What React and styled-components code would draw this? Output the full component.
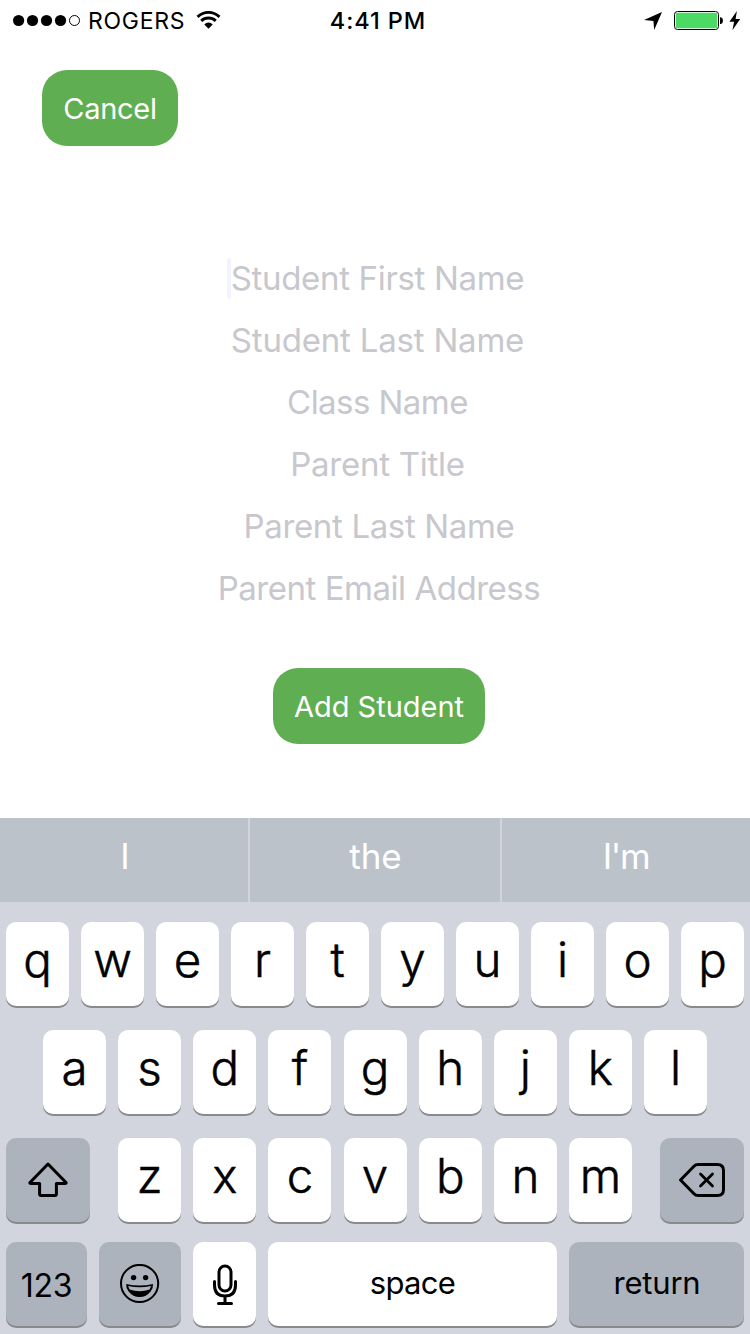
import React from "react";
import styled, { createGlobalStyle } from "styled-components";

const GlobalStyle = createGlobalStyle`
  * { box-sizing: border-box; }
  body { margin: 0; background: #fff; }
`;

const Screen = styled.div`
  display: flex;
  flex-direction: column;
  width: 750px;
  height: 1334px;
  overflow: hidden;
  background: #fff;
  color: #000;
  font-family: Inter, "Liberation Sans", sans-serif;
`;

const StatusBar = styled.header`
  display: grid;
  grid-template-columns: 1fr auto 1fr;
  align-items: center;
  height: 40px;
  padding: 0 9px 0 12px;
`;

const StatusGroup = styled.div`
  display: flex;
  align-items: center;
`;

const PowerGroup = styled(StatusGroup)`
  justify-content: flex-end;
  gap: 5px;
  padding-top: 1px;
`;

const Carrier = styled.span`
  margin: 0 11px 0 6px;
  padding-top: 2px;
  font-size: 23px;
  line-height: 38px;
  letter-spacing: 0.7px;
`;

const Clock = styled.span`
  padding: 1px 0 0 3px;
  font-size: 23.5px;
  font-weight: 500;
  line-height: 39px;
  letter-spacing: 0.93px;
`;

const Form = styled.main`
  display: flex;
  flex-direction: column;
  height: 778px;
  padding: 30px 0 0;
`;

const Button = styled.button`
  display: flex;
  align-items: center;
  justify-content: center;
  align-self: ${(p) => (p.$centered ? "center" : "flex-start")};
  width: ${(p) => p.$width}px;
  height: 76px;
  margin: ${(p) => p.$margin};
  padding: 1px 0 0;
  border: 0;
  border-radius: 25px;
  background: #60ae52;
  color: #fff;
  font: 400 29px/36px Inter, "Liberation Sans", sans-serif;
  letter-spacing: ${(p) => p.$spacing ?? 0}px;
`;

const Fields = styled.div`
  display: flex;
  flex-direction: column;
  align-items: center;
  margin-top: 101px;
  padding-left: 5px;
`;

const Field = styled.div`
  position: relative;
  height: 62px;
  padding-left: ${(p) => p.$indent}px;
  color: #c7c7cd;
  font-size: 33px;
  line-height: 62px;
  white-space: nowrap;
  letter-spacing: ${(p) => p.$spacing}px;
`;

const Caret = styled.span`
  position: absolute;
  top: 11px;
  left: -4px;
  width: 4px;
  height: 41px;
  border-radius: 2px;
  background: #f1f4fe;
`;

const Keyboard = styled.section`
  display: flex;
  flex-direction: column;
  height: 516px;
  background: #d2d5dd;
`;

const Suggestions = styled.div`
  display: grid;
  grid-template-columns: 248px 250px 248px;
  gap: 2px;
  height: 84px;
`;

const Suggestion = styled.div`
  padding-left: ${(p) => p.$indent ?? 1}px;
  background: #bbc2ca;
  color: #fff;
  font-size: 35px;
  line-height: 76px;
  text-align: center;
  letter-spacing: ${(p) => p.$spacing ?? 0}px;
`;

const Rows = styled.div`
  display: flex;
  flex-direction: column;
  gap: 24px;
  padding: 20px 6px 0;
`;

const Row = styled.div`
  display: flex;
  gap: 12px;
  padding: 0 ${(p) => p.$inset ?? 0}px;
  margin-top: ${(p) => p.$lift ?? 0}px;
`;

const Letters = styled.div`
  display: flex;
  flex: 1;
  justify-content: space-between;
  margin: ${(p) => p.$margin ?? 0};
`;

const Key = styled.div`
  display: flex;
  flex: none;
  align-items: center;
  justify-content: center;
  width: ${(p) => p.$width ?? 63}px;
  height: 84px;
  border-radius: 10px;
  background: ${(p) => (p.$dark ? "#acb3bd" : "#fff")};
  box-shadow: 0 2px 0 #898a8e;
`;

const Letter = styled.span`
  padding-bottom: 9px;
  font-size: 47.5px;
  font-weight: 300;
  line-height: 75px;
  -webkit-text-stroke: 0.5px #000;
`;

const Label = styled.span`
  padding: ${(p) => p.$padding};
  font-size: ${(p) => p.$size}px;
  line-height: 40px;
  letter-spacing: ${(p) => p.$spacing}px;
`;

const SignalDots = () => (
  <svg width="70" height="14" viewBox="0 0 70 14">
    {[6.6, 20.5, 34.5, 48.5].map((x) => (
      <circle key={x} cx={x} cy="7.5" r="5.6" />
    ))}
    <circle cx="62.5" cy="7.5" r="5" fill="none" stroke="#000" strokeWidth="1" />
  </svg>
);

const WifiIcon = () => (
  <svg width="26" height="20" viewBox="0 0 26 20">
    <g fill="none" stroke="#000" strokeWidth="2.9">
      <path d="M1.5 6.9Q6.5 2.4 12.5 2.4T23.5 6.9" />
      <path d="M5.2 10.8Q8.3 8 12.5 8T19.8 10.8" />
    </g>
    <path d="M8.3 14.6Q10 12.6 12.5 12.6T16.7 14.6L12.5 18.8Z" />
  </svg>
);

const LocationIcon = () => (
  <svg width="25" height="18" viewBox="0 0 25 18">
    <path d="M18 0L10.2 18L9.4 9.1L0 8.1Z" />
  </svg>
);

const BatteryIcon = () => (
  <svg width="50" height="20" viewBox="0 0 50 20">
    <rect x="0.5" y="0.5" width="44" height="18" rx="3" fill="#fff" stroke="#000" strokeWidth="1" />
    <rect x="1.8" y="1.8" width="41.4" height="15.4" rx="1.5" fill="#4cd964" />
    <path d="M46 6.2H47Q49 7 49 9.6T47 13H46Z" />
  </svg>
);

const BoltIcon = () => (
  <svg width="12" height="20" viewBox="0 0 12 20">
    <path d="M7.9 0L0.4 10.8H5.1L3.4 19.2L11.2 7.9H6.6Z" />
  </svg>
);

const ShiftIcon = () => (
  <svg width="40" height="36" viewBox="0 0 40 36" fill="none" stroke="#000" strokeWidth="3" strokeLinejoin="round">
    <path d="M20 2L38 20.5Q38.5 21.5 37 21.5H28.4V32Q28.4 33.5 26.9 33.5H13.1Q11.6 33.5 11.6 32V21.5H3Q1.5 21.5 2 20.5Z" />
  </svg>
);

const DeleteIcon = () => (
  <svg width="48" height="36" viewBox="0 0 48 36" fill="none" stroke="#000" strokeWidth="3" strokeLinejoin="round" strokeLinecap="round">
    <path d="M2.5 18L16 4.2Q17.6 2.5 20 2.5H39.5Q45.5 2.5 45.5 8.5V27.5Q45.5 33.5 39.5 33.5H20Q17.6 33.5 16 31.8Z" />
    <path d="M22.5 12L34.5 24M34.5 12L22.5 24" strokeWidth="2.8" />
  </svg>
);

const EmojiIcon = () => (
  <svg width="40" height="40" viewBox="0 0 40 40">
    <circle cx="19.6" cy="19.5" r="18.6" fill="none" stroke="#000" strokeWidth="2" />
    <circle cx="13.6" cy="13.6" r="2.7" />
    <circle cx="25.6" cy="13.6" r="2.7" />
    <path d="M6.2 20Q19.6 23.2 33 20Q33.4 24 30.6 27.5Q26.3 33 19.6 33T8.6 27.5Q5.8 24 6.2 20Z" />
    <path d="M8.3 22Q19.6 24.5 30.9 22Q30.6 23.7 29.6 25.5Q19.6 28.8 9.6 25.5Q8.6 23.7 8.3 22Z" fill="#acb3bd" />
  </svg>
);

const MicIcon = () => (
  <svg width="26" height="42" viewBox="0 0 26 42" fill="none" stroke="#000" strokeWidth="3" strokeLinecap="round">
    <rect x="7" y="3" width="12" height="25" rx="6" />
    <path d="M2.5 18.5V22Q2.5 33 13 33T23.5 22V18.5M13 33V40.5M6.5 40.5H19.5" />
  </svg>
);

const fields = [
  { label: "Student First Name", spacing: -0.33, indent: 0 },
  { label: "Student Last Name", spacing: -0.2, indent: 0 },
  { label: "Class Name", spacing: -0.55, indent: 0 },
  { label: "Parent Title", spacing: -0.25, indent: 0 },
  { label: "Parent Last Name", spacing: -0.35, indent: 3 },
  { label: "Parent Email Address", spacing: -0.47, indent: 3 },
];

const letterKeys = (letters) =>
  [...letters].map((letter) => (
    <Key key={letter}>
      <Letter>{letter}</Letter>
    </Key>
  ));

export default function App() {
  return (
    <Screen>
      <GlobalStyle />
      <StatusBar>
        <StatusGroup>
          <SignalDots />
          <Carrier>ROGERS</Carrier>
          <WifiIcon />
        </StatusGroup>
        <Clock>4:41 PM</Clock>
        <PowerGroup>
          <LocationIcon />
          <BatteryIcon />
          <BoltIcon />
        </PowerGroup>
      </StatusBar>

      <Form>
        <Button $width={136} $margin="0 0 0 42px" $spacing={-0.3}>Cancel</Button>
        <Fields>
          {fields.map(({ label, spacing, indent }, i) => (
            <Field key={label} $spacing={spacing} $indent={indent}>
              {i === 0 && <Caret />}
              {label}
            </Field>
          ))}
        </Fields>
        <Button $centered $width={212} $margin="49px 0 0 8px">Add Student</Button>
      </Form>

      <Keyboard>
        <Suggestions>
          <Suggestion $indent={2}>I</Suggestion>
          <Suggestion>the</Suggestion>
          <Suggestion $indent={0} $spacing={-1.3}>I'm</Suggestion>
        </Suggestions>
        <Rows>
          <Row>
            <Letters>{letterKeys("qwertyuiop")}</Letters>
          </Row>
          <Row $inset={37}>
            <Letters>{letterKeys("asdfghjkl")}</Letters>
          </Row>
          <Row>
            <Key $dark $width={84}><ShiftIcon /></Key>
            <Letters $margin="0 15.9px 0 16.1px">{letterKeys("zxcvbnm")}</Letters>
            <Key $dark $width={84}><DeleteIcon /></Key>
          </Row>
          <Row $lift={-4}>
            <Key $dark $width={81}><Label $size={32} $spacing={-0.3} $padding="3px 0 0">123</Label></Key>
            <Key $dark $width={82}><EmojiIcon /></Key>
            <Key><MicIcon /></Key>
            <Key $width={289}><Label $size={31} $spacing={-0.65} $padding="0 0 3px">space</Label></Key>
            <Key $dark $width={175}><Label $size={31} $spacing={-0.2} $padding="0 0 3px 1px">return</Label></Key>
          </Row>
        </Rows>
      </Keyboard>
    </Screen>
  );
}
